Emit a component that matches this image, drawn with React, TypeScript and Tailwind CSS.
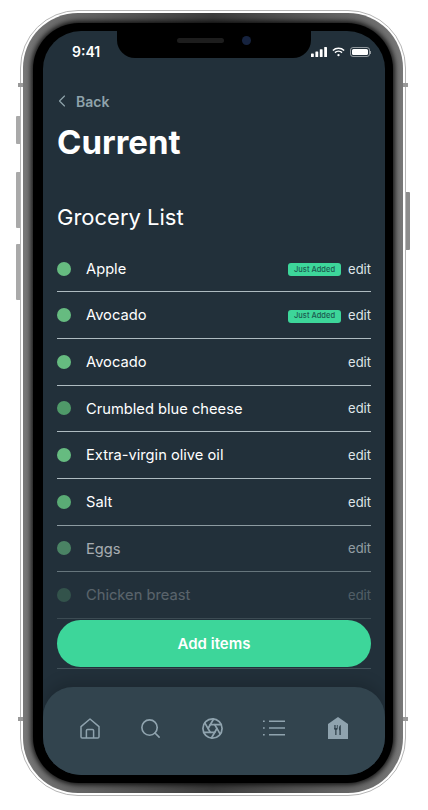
import { Aperture, ChevronLeft, Search } from "lucide-react";

const items = [
  { name: "Apple", fresh: true, dot: "bg-[#66bb80]", row: "opacity-100", line: "border-[#aebbc0]" },
  { name: "Avocado", fresh: true, dot: "bg-[#66bb80]", row: "opacity-100", line: "border-[#aebbc0]" },
  { name: "Avocado", fresh: false, dot: "bg-[#66bb80]", row: "opacity-100", line: "border-[#aebbc0]" },
  { name: "Crumbled blue cheese", fresh: false, dot: "bg-[#4f9a69]", row: "opacity-100", line: "border-[#aebbc0]" },
  { name: "Extra-virgin olive oil", fresh: false, dot: "bg-[#66bb80]", row: "opacity-100", line: "border-[#aebbc0]" },
  { name: "Salt", fresh: false, dot: "bg-[#5aab75]", row: "opacity-100", line: "border-[#8d9ba1]" },
  { name: "Eggs", fresh: false, dot: "bg-[#66bb80]", row: "opacity-60", line: "border-[#66757c]" },
  { name: "Chicken breast", fresh: false, dot: "bg-[#66bb80]", row: "opacity-25", line: "border-[#3c4b53]" },
];

function StatusIcons() {
  return (
    <div className="flex items-center gap-[5px]">
      <svg width="16" height="10" viewBox="0 0 16 10" fill="white">
        <rect x="0" y="6.5" width="2.8" height="3.5" rx="0.6" />
        <rect x="4.4" y="4.5" width="2.8" height="5.5" rx="0.6" />
        <rect x="8.8" y="2.2" width="2.8" height="7.8" rx="0.6" />
        <rect x="13.2" y="0" width="2.8" height="10" rx="0.6" />
      </svg>
      <svg width="13" height="10" viewBox="0 0 15 11" fill="none" stroke="white" strokeWidth="1.7">
        <path d="M1 3.8a9.4 9.4 0 0 1 13 0" />
        <path d="M3.4 6.2a6 6 0 0 1 8.2 0" />
        <circle cx="7.5" cy="9.2" r="1.3" fill="white" stroke="none" />
      </svg>
      <div className="flex items-center">
        <div className="h-[10px] w-[20px] rounded-[3px] border border-white/50 p-[1px]">
          <div className="h-full w-full rounded-[1.5px] bg-white" />
        </div>
        <div className="h-[3px] w-[1px] bg-white/50" />
      </div>
    </div>
  );
}

function HomeIcon() {
  return (
    <svg width="20" height="21" viewBox="0 0 20 21" fill="none" stroke="#8fa3ae" strokeWidth="1.5" strokeLinejoin="round">
      <path d="M1 8.6 10 1l9 7.6V18.7a1.3 1.3 0 0 1-1.3 1.3H2.3A1.3 1.3 0 0 1 1 18.7Z" />
      <path d="M6.4 20v-7.4a1.2 1.2 0 0 1 1.2-1.2h4.8a1.2 1.2 0 0 1 1.2 1.2V20" />
    </svg>
  );
}

function ListIcon() {
  return (
    <svg width="22" height="16" viewBox="0 0 22 16" stroke="#8fa3ae" strokeWidth="1.5">
      <path d="M6 1.2h16M6 8h16M6 14.8h16" />
      <path d="M0 1.2h1.7M0 8h1.7M0 14.8h1.7" />
    </svg>
  );
}

function RestaurantIcon() {
  return (
    <svg width="20" height="22" viewBox="0 0 20 22">
      <path d="M10 0 20 7v15H0V7Z" fill="#8fa3ae" />
      <path d="M6 8v3.5a1.6 1.6 0 0 0 1.2 1.5v5h1.3v-5a1.6 1.6 0 0 0 1.2-1.5V8H9v3H8.2V8H7.4v3H6.7V8Z" fill="#32444e" />
      <path d="M11.4 18h1.4V8c-1.2.4-1.9 2-1.9 3.6 0 1 .2 1.7.5 2.2Z" fill="#32444e" />
    </svg>
  );
}

function BottomNav() {
  return (
    <nav className="mt-auto flex h-[88px] items-center rounded-t-[30px] bg-[#32444e] pb-[6px] pl-[37px] shadow-[0_-6px_14px_rgba(0,0,0,0.15)]">
      <HomeIcon />
      <Search size={23} strokeWidth={1.7} color="#8fa3ae" className="ml-[38.5px]" />
      <Aperture size={23} strokeWidth={1.8} color="#8fa3ae" className="ml-[39px]" />
      <div className="ml-[39.5px]">
        <ListIcon />
      </div>
      <div className="ml-[43px]">
        <RestaurantIcon />
      </div>
    </nav>
  );
}

function GroceryRow({ name, fresh, dot, row, line }: { name: string; fresh: boolean; dot: string; row: string; line: string }) {
  return (
    <div className={`flex h-[46.67px] items-center border-b ${line}`}>
      <div className={`flex w-full items-center ${row}`}>
        <div className={`h-[14px] w-[14px] rounded-full ${dot}`} />
        <span className="ml-[15px] pt-[1px] text-[14.7px] leading-none text-white">{name}</span>
        {fresh && (
          <span className="ml-auto mt-[2px] flex h-[13px] w-[53px] items-center justify-center rounded-[3px] bg-[#3dd69a] text-[7.5px] font-medium leading-none text-[#1c5a50]">
            Just Added
          </span>
        )}
        <span className={`${fresh ? "ml-[7px]" : "ml-auto"} pt-[1px] text-[13px] leading-none text-[#dfe5e8]`}>edit</span>
      </div>
    </div>
  );
}

export default function App() {
  return (
    <div className="h-[810px] w-[428px] bg-white pl-[20px] pt-[10px] font-['Inter',sans-serif]">
      <div className="relative h-[786px] w-[386px]">
        {/* hardware buttons */}
        <div className="absolute -left-[4px] top-[106px] h-[28px] w-[4px] rounded-l-[1px] bg-[#a9a9a9]" />
        <div className="absolute -left-[4px] top-[162px] h-[56px] w-[4px] rounded-l-[1px] bg-[#a9a9a9]" />
        <div className="absolute -left-[4px] top-[234px] h-[56px] w-[4px] rounded-l-[1px] bg-[#a9a9a9]" />
        <div className="absolute -right-[4px] top-[182px] h-[58px] w-[4px] rounded-r-[1px] bg-[#8d8d8d]" />
        <div className="absolute -left-[2px] top-[73px] h-[4px] w-[5px] bg-[#999]" />
        <div className="absolute -right-[2px] top-[73px] h-[4px] w-[5px] bg-[#999]" />
        <div className="absolute -left-[2px] top-[707px] h-[4px] w-[5px] bg-[#999]" />
        <div className="absolute -right-[2px] top-[707px] h-[4px] w-[5px] bg-[#999]" />

        <div className="h-full rounded-[58px] border border-[#b5b5b5] bg-white p-[2px]">
          <div className="h-full rounded-[55px] bg-gradient-to-r from-[#777777] via-[#3c3c3c] to-[#777777] p-[10px]">
            <div className="h-full rounded-[46px] bg-black pb-[8px] pl-[10px] pr-[8px] pt-[8px] shadow-[0_0_5px_2px_rgba(0,0,0,0.8)]">
              <div className="relative flex h-full flex-col overflow-hidden rounded-[38px] bg-[#22303a]">
                {/* notch */}
                <div className="absolute left-[74px] top-0 flex h-[27px] w-[194px] items-center justify-center gap-[18px] rounded-b-[18px] bg-black pb-[8px]">
                  <div className="h-[5px] w-[47px] rounded-full bg-[#1d1d1d]" />
                  <div className="h-[9px] w-[9px] rounded-full bg-[#16233f]" />
                </div>

                <div className="flex h-[30px] items-center justify-between pl-[29px] pr-[14px] pt-[12px]">
                  <span className="text-[14px] font-semibold leading-[18px] text-white">9:41</span>
                  <StatusIcons />
                </div>

                <div className="flex flex-col px-[14px]">
                  <div className="mt-[30px] flex h-[20px] items-center text-[#8fa3ab]">
                    <ChevronLeft size={20} strokeWidth={1.4} className="-ml-[5px]" />
                    <span className="ml-[4px] text-[14px] font-semibold">Back</span>
                  </div>
                  <h1 className="mt-[11px] h-[40px] text-[33px] font-bold leading-[40px] text-white">Current</h1>
                  <h2 className="mt-[41px] h-[28px] text-[22px] leading-[28px] text-white">Grocery List</h2>
                  <div className="mt-[14.7px] flex flex-col">
                    {items.map((item, i) => (
                      <GroceryRow key={i} {...item} />
                    ))}
                  </div>
                  <button className="mt-[1px] h-[47px] rounded-full bg-[#3dd69a] pt-[1px] text-[15px] font-semibold text-white">
                    Add items
                  </button>
                  <div className="mt-[1px] border-b border-[#42525a]" />
                </div>

                <BottomNav />
              </div>
            </div>
          </div>
        </div>
      </div>
    </div>
  );
}
